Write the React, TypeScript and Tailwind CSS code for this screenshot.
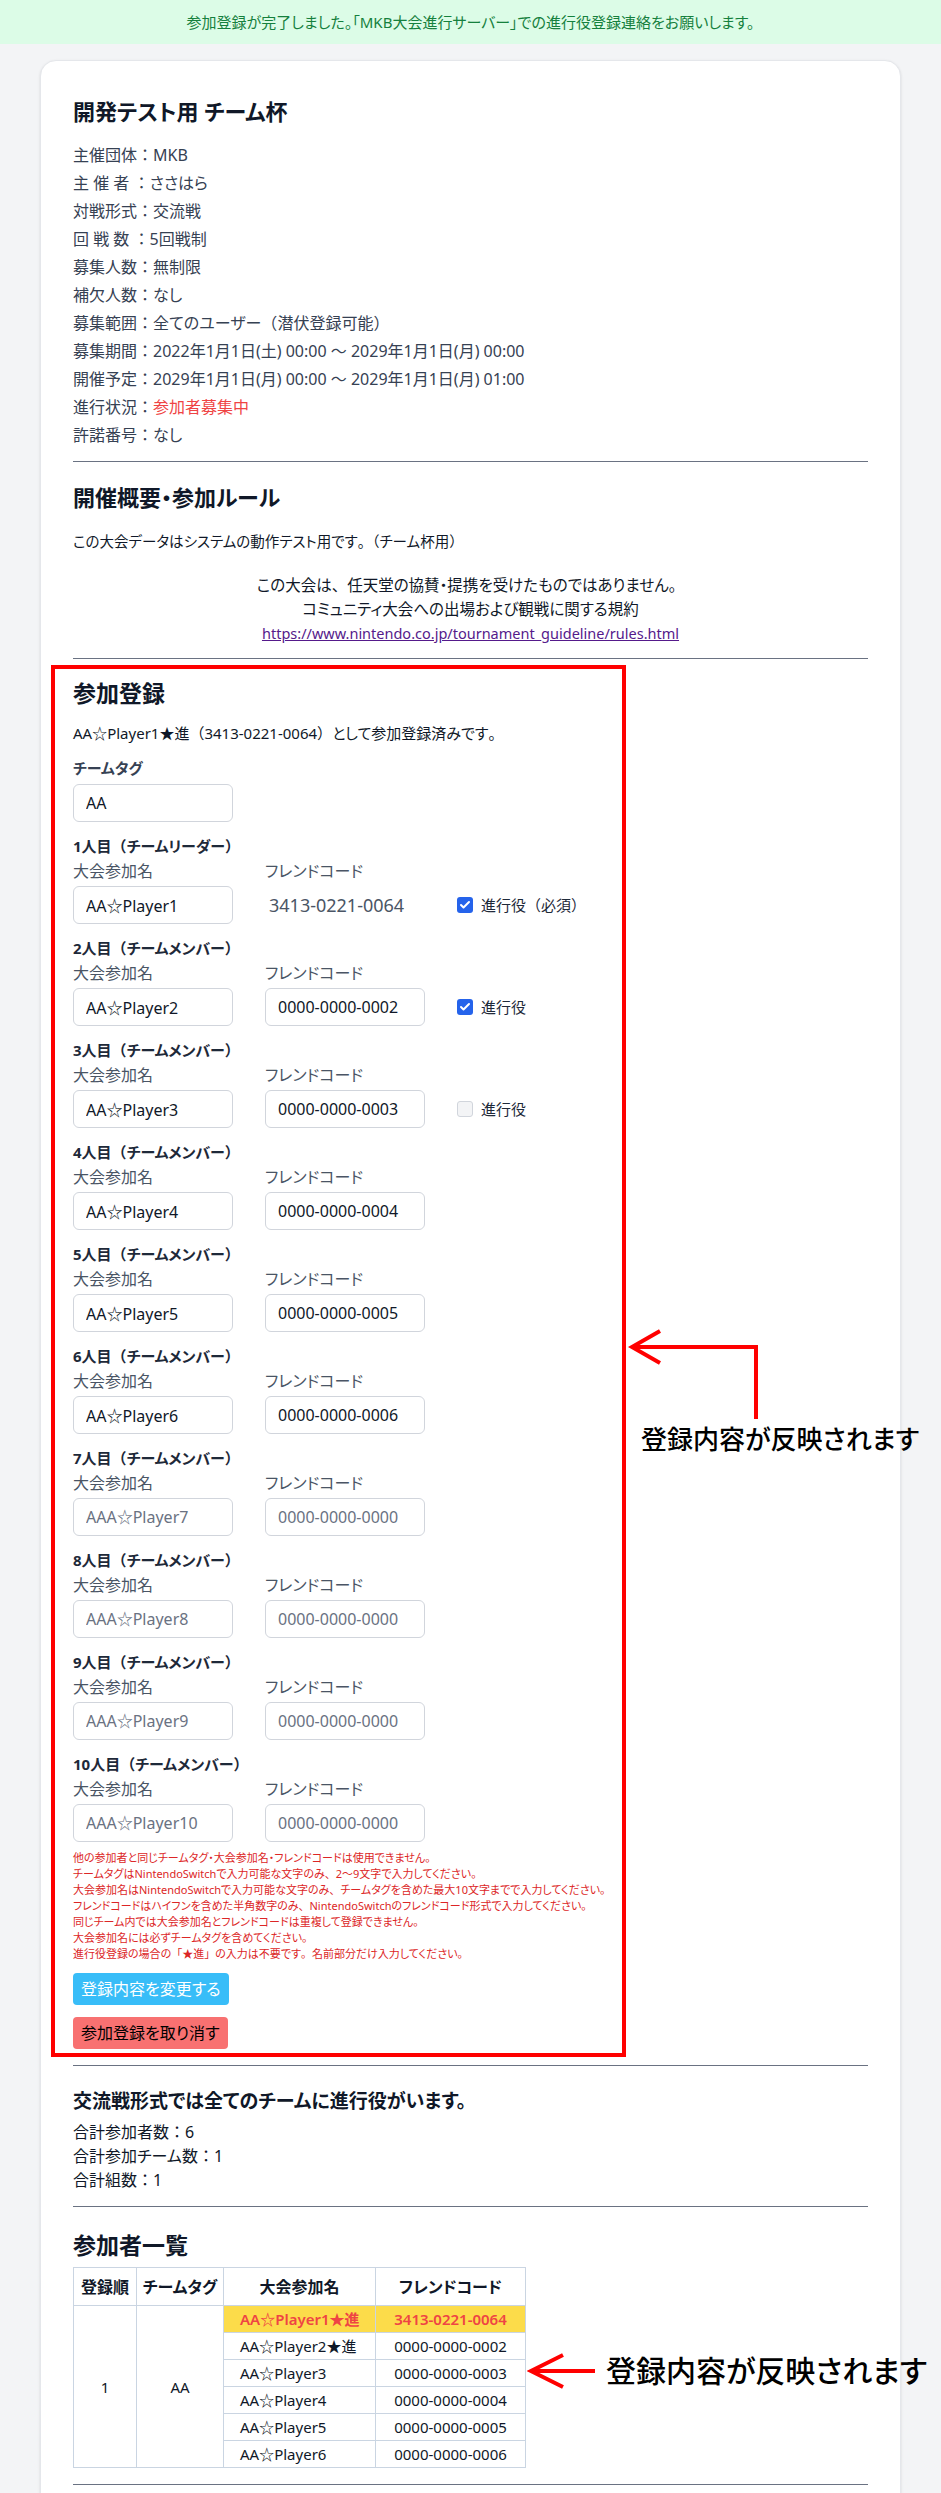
import { Check } from "lucide-react";

// 全角の約物だけは詰めずに表示する（元画面のフォントに合わせる）
function Jp({ t }: { t: string }) {
  return (
    <span>
      {t.split(/([、。（）：「」])/).map((s, i) =>
        /^[、。（）：「」]$/.test(s) ? (
          <span key={i} className="[font-feature-settings:normal]">
            {s}
          </span>
        ) : (
          s
        )
      )}
    </span>
  );
}

const info = [
  ["主催団体", "MKB"],
  ["主 催 者 ", "ささはら"],
  ["対戦形式", "交流戦"],
  ["回 戦 数 ", "5回戦制"],
  ["募集人数", "無制限"],
  ["補欠人数", "なし"],
  ["募集範囲", "全てのユーザー（潜伏登録可能）"],
  ["募集期間", "2022年1月1日(土) 00:00 〜 2029年1月1日(月) 00:00"],
  ["開催予定", "2029年1月1日(月) 00:00 〜 2029年1月1日(月) 01:00"],
  ["進行状況", "参加者募集中"],
  ["許諾番号", "なし"],
];

type Member = {
  name?: string;
  code?: string;
  fixedCode?: string;
  check?: "on" | "off";
  checkLabel?: string;
};

const members: Member[] = [
  { name: "AA☆Player1", fixedCode: "3413-0221-0064", check: "on", checkLabel: "進行役（必須）" },
  { name: "AA☆Player2", code: "0000-0000-0002", check: "on", checkLabel: "進行役" },
  { name: "AA☆Player3", code: "0000-0000-0003", check: "off", checkLabel: "進行役" },
  { name: "AA☆Player4", code: "0000-0000-0004" },
  { name: "AA☆Player5", code: "0000-0000-0005" },
  { name: "AA☆Player6", code: "0000-0000-0006" },
  {},
  {},
  {},
  {},
];

const notes = [
  "他の参加者と同じチームタグ・大会参加名・フレンドコードは使用できません。",
  "チームタグはNintendoSwitchで入力可能な文字のみ、2〜9文字で入力してください。",
  "大会参加名はNintendoSwitchで入力可能な文字のみ、チームタグを含めた最大10文字までで入力してください。",
  "フレンドコードはハイフンを含めた半角数字のみ、NintendoSwitchのフレンドコード形式で入力してください。",
  "同じチーム内では大会参加名とフレンドコードは重複して登録できません。",
  "大会参加名には必ずチームタグを含めてください。",
  "進行役登録の場合の「★進」の入力は不要です。名前部分だけ入力してください。",
];

const rows = [
  ["AA☆Player1★進", "3413-0221-0064"],
  ["AA☆Player2★進", "0000-0000-0002"],
  ["AA☆Player3", "0000-0000-0003"],
  ["AA☆Player4", "0000-0000-0004"],
  ["AA☆Player5", "0000-0000-0005"],
  ["AA☆Player6", "0000-0000-0006"],
];

const inputCls =
  "h-[38px] w-40 rounded-md border border-gray-300 bg-white px-3 text-base text-gray-900 outline-none placeholder:text-gray-500";

function MemberRow({ m, i }: { m: Member; i: number }) {
  return (
    <div className="mt-[14px]">
      <h4 className="text-[15px] leading-5 font-bold text-gray-800">
        <Jp t={`${i + 1}人目（${i === 0 ? "チームリーダー" : "チームメンバー"}）`} />
      </h4>
      <div className="mt-[3px] flex text-base leading-6 text-gray-600">
        <span className="w-40">大会参加名</span>
        <span className="ml-8">フレンドコード</span>
      </div>
      <div className="mt-[3px] flex items-center">
        <input
          className={inputCls}
          defaultValue={m.name}
          placeholder={`AAA☆Player${i + 1}`}
        />
        {m.fixedCode ? (
          <div className="ml-8 w-40 pl-1 text-lg text-gray-600">{m.fixedCode}</div>
        ) : (
          <input
            className={`ml-8 ${inputCls}`}
            defaultValue={m.code}
            placeholder="0000-0000-0000"
          />
        )}
        {m.check && (
          <label className="ml-8 flex items-center gap-2 text-[15px] text-gray-800">
            {m.check === "on" ? (
              <span className="flex h-4 w-4 items-center justify-center rounded-[3px] bg-[#2563eb]">
                <Check className="h-3 w-3 text-white" strokeWidth={4} />
              </span>
            ) : (
              <span className="h-4 w-4 rounded-[3px] border border-gray-300 bg-gray-100" />
            )}
            <Jp t={m.checkLabel ?? ""} />
          </label>
        )}
      </div>
    </div>
  );
}

export default function App() {
  return (
    <div className="relative min-h-screen bg-[#f3f4f6] font-['Noto_Sans','Noto_Sans_CJK_JP',sans-serif] text-gray-800 [font-feature-settings:'palt']">
      <div className="bg-[#dcfce7] py-3 text-center text-[15px] leading-5 text-[#15803d]">
        参加登録が完了しました。「MKB大会進行サーバー」での進行役登録連絡をお願いします。
      </div>

      <div className="mx-10 mt-4 rounded-2xl border border-gray-200 bg-white p-8 pb-24 shadow-sm">
        <h1 className="text-[22px] leading-9 font-bold text-gray-900">開発テスト用 チーム杯</h1>
        <div className="mt-3 text-base leading-7 text-gray-700">
          {info.map(([k, v]) => (
            <div key={k}>
              <Jp t={`${k}：`} />
              <span className={k === "進行状況" ? "text-[#ef4444]" : ""}>
                <Jp t={v} />
              </span>
            </div>
          ))}
        </div>
        <hr className="mt-3 border-gray-500" />

        <h2 className="mt-[17px] text-[22px] leading-9 font-bold text-gray-900">開催概要・参加ルール</h2>
        <p className="mt-[14px] text-[14.5px] leading-6 text-gray-900">
          <Jp t="この大会データはシステムの動作テスト用です。（チーム杯用）" />
        </p>
        <div className="mt-5 text-center text-[15.5px] leading-6 text-gray-900">
          <p>
            <Jp t="この大会は、任天堂の協賛・提携を受けたものではありません。" />
          </p>
          <p>コミュニティ大会への出場および観戦に関する規約</p>
          <a href="#" className="text-[14.5px] text-[#551a8b] underline">
            https://www.nintendo.co.jp/tournament_guideline/rules.html
          </a>
        </div>
        <hr className="mt-[13px] border-gray-500" />

        {/* 参加登録フォーム（赤枠） */}
        <div className="mt-[6px] -ml-[22px] w-[575px] border-4 border-[#ff0000] pt-2 pb-1 pl-[18px]">
          <h2 className="text-[23px] leading-8 font-bold text-gray-900">参加登録</h2>
          <p className="mt-3 text-[15px] leading-6 text-gray-900">
            <Jp t="AA☆Player1★進（3413-0221-0064）として参加登録済みです。" />
          </p>
          <div className="mt-[13px] text-[15px] leading-5 font-bold text-gray-700">チームタグ</div>
          <input className={`mt-1.5 ${inputCls}`} defaultValue="AA" />

          {members.map((m, i) => (
            <MemberRow key={i} m={m} i={i} />
          ))}

          <div className="mt-2 text-[11px] leading-4 whitespace-nowrap text-[#dc2626]">
            {notes.map((n) => (
              <p key={n}>
                <Jp t={n} />
              </p>
            ))}
          </div>
          <button className="mt-[11px] block rounded bg-[#38bdf8] px-2 py-1 text-base leading-6 text-white">
            登録内容を変更する
          </button>
          <button className="mt-3 block rounded bg-[#f87171] px-2 py-1 text-base leading-6 text-black">
            参加登録を取り消す
          </button>
        </div>
        <hr className="mt-2 border-gray-500" />

        <h3 className="mt-[21px] text-[19px] leading-7 font-bold text-gray-900">
          交流戦形式では全てのチームに進行役がいます。
        </h3>
        <div className="mt-[5px] text-base leading-6 text-gray-900">
          <p>
            <Jp t="合計参加者数：6" />
          </p>
          <p>
            <Jp t="合計参加チーム数：1" />
          </p>
          <p>
            <Jp t="合計組数：1" />
          </p>
        </div>
        <hr className="mt-[14px] border-gray-500" />

        <h2 className="mt-[22px] text-[23px] leading-8 font-bold text-gray-900">参加者一覧</h2>
        <table className="mt-[6px] w-[452px] table-fixed border-collapse text-[15px] text-gray-900">
          <thead>
            <tr className="h-[38px] text-base font-bold">
              <th className="w-[63px] border border-slate-300">登録順</th>
              <th className="w-[87px] border border-slate-300">チームタグ</th>
              <th className="w-[152px] border border-slate-300">大会参加名</th>
              <th className="w-[150px] border border-slate-300">フレンドコード</th>
            </tr>
          </thead>
          <tbody>
            {rows.map(([name, code], i) => (
              <tr key={name} className="h-[27px] leading-[26px] whitespace-nowrap">
                {i === 0 && (
                  <>
                    <td rowSpan={6} className="border border-slate-300 text-center">1</td>
                    <td rowSpan={6} className="border border-slate-300 text-center">AA</td>
                  </>
                )}
                <td
                  className={`border border-slate-300 px-4 text-left ${
                    i === 0 ? "bg-[#fcdc4a] font-semibold text-[#ef4444]" : ""
                  }`}
                >
                  {name}
                </td>
                <td
                  className={`border border-slate-300 text-center ${
                    i === 0 ? "bg-[#fcdc4a] font-semibold text-[#ef4444]" : ""
                  }`}
                >
                  {code}
                </td>
              </tr>
            ))}
          </tbody>
        </table>
        <hr className="mt-4 border-gray-500" />
      </div>

      {/* 注釈 */}
      <svg
        className="absolute top-[1327px] left-[628px]"
        width="132"
        height="95"
        viewBox="0 0 132 95"
        fill="none"
        stroke="#ff0000"
        strokeWidth="4"
      >
        <polyline points="4,20 128,20 128,92" />
        <polyline points="32,4 4,20 32,36" />
      </svg>
      <div className="absolute top-[1423px] left-[641px] text-[26px] leading-8 font-medium text-black">
        登録内容が反映されます
      </div>

      <svg
        className="absolute top-[2352px] left-[527px]"
        width="72"
        height="38"
        viewBox="0 0 72 38"
        fill="none"
        stroke="#ff0000"
        strokeWidth="4"
      >
        <line x1="4" y1="19" x2="68" y2="19" />
        <polyline points="36,3 4,19 36,35" />
      </svg>
      <div className="absolute top-[2353px] left-[606px] text-[30px] leading-9 font-medium whitespace-nowrap text-black">
        登録内容が反映されます
      </div>
    </div>
  );
}
